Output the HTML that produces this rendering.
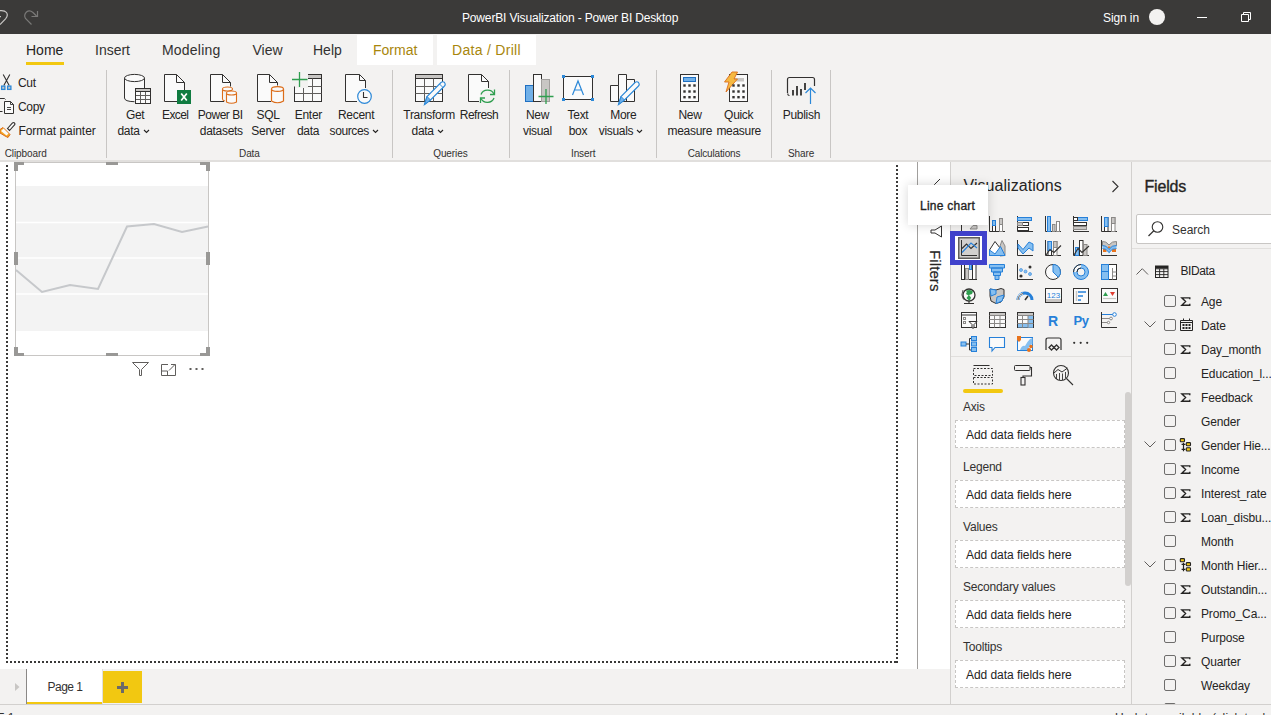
<!DOCTYPE html>
<html><head><meta charset="utf-8">
<style>
*{box-sizing:border-box;margin:0;padding:0}
html,body{width:1271px;height:715px;overflow:hidden;background:#fff;font-family:"Liberation Sans",sans-serif;color:#252423}
.a{position:absolute}
.t{position:absolute;white-space:nowrap;line-height:1}
#title{left:0;top:0;width:1271px;height:34px;background:#3b3a39}
#tabs{left:0;top:34px;width:1271px;height:32px;background:#f3f2f1}
#ribbon{left:0;top:66px;width:1271px;height:96px;background:#f3f2f1;border-bottom:2px solid #e1dfdd}
.sep{position:absolute;top:70px;width:1px;height:88px;background:#c8c6c4}
.cb{position:absolute;left:1164px;width:12px;height:12px;border:1.3px solid #6e6d6c;border-radius:2px}
.sig{left:1181px;font-size:13px;font-weight:bold;color:#323130}
.well{position:absolute;left:955px;width:170px;height:28px;background:#fff;border:1px dashed #c8c6c4}
</style></head><body>
<div class="a" id="title"></div><div class="a" id="tabs"></div><div class="a" id="ribbon"></div>
<!-- TITLE BAR -->
<svg class="a" style="left:0;top:0" width="45" height="34" viewBox="0 0 45 34">
<path d="M-1 10.8 Q4.5 10 6.5 12.5 Q8.5 15.5 5.5 18.8 L0 24.5 M-1 16.7 H1" fill="none" stroke="#c8c6c4" stroke-width="1.2"/>
<path d="M31.5 24.5 L25.5 18.5 Q23.5 15 26.5 12 Q29.5 9.5 33 12.5 L36.5 16 M37.5 11 V16.5 H31.5" fill="none" stroke="#7a7978" stroke-width="1.2"/>
</svg>
<div class="t" style="left:462px;top:11.5px;font-size:12px;color:#fff;letter-spacing:-0.16px">PowerBI Visualization - Power BI Desktop</div>
<div class="t" style="left:1103px;top:11.5px;font-size:12px;color:#fff;letter-spacing:-0.1px">Sign in</div>
<div class="a" style="left:1149px;top:9px;width:16px;height:16px;border-radius:50%;background:#f3f2f1"></div>
<div class="a" style="left:1197px;top:17px;width:10px;height:1px;background:#fff"></div>
<svg class="a" style="left:1238px;top:10px" width="16" height="16" viewBox="1238 10 16 16"><path d="M1241.5 14.5 h7 v7 h-7 z M1243.5 14.5 v-2 h7 v7 h-2" fill="none" stroke="#fff" stroke-width="1"/></svg>
<!-- TABS -->
<div class="t" style="left:26px;top:43px;font-size:14px;color:#252423">Home</div>
<div class="a" style="left:26px;top:62px;width:38px;height:3px;background:#f2c811"></div>
<div class="t" style="left:95px;top:43px;font-size:14px;color:#323130">Insert</div>
<div class="t" style="left:162px;top:43px;font-size:14px;color:#323130;letter-spacing:0.2px">Modeling</div>
<div class="t" style="left:252.5px;top:43px;font-size:14px;color:#323130">View</div>
<div class="t" style="left:313px;top:43px;font-size:14px;color:#323130">Help</div>
<div class="a" style="left:357px;top:35px;width:76px;height:30px;background:#fff"></div>
<div class="a" style="left:437px;top:35px;width:99px;height:30px;background:#fff"></div>
<div class="t" style="left:373px;top:43px;font-size:14px;color:#a8860c">Format</div>
<div class="t" style="left:452px;top:43px;font-size:14px;color:#a8860c;letter-spacing:0.3px">Data / Drill</div>
<svg class="a" style="left:0;top:0" width="850" height="161" viewBox="0 0 850 161">
<g fill="none" stroke="#323130" stroke-width="1">
<!-- cut -->
<path d="M3.2 74.5 L9.2 85.5 M9.8 74.5 L3.8 85.5" stroke-width="1.1"/>
<rect x="1.6" y="86.1" width="3.3" height="3.3" stroke="#2b88d8" stroke-width="1.3" fill="#c8c6c4"/>
<rect x="7.6" y="86.1" width="3.3" height="3.3" stroke="#2b88d8" stroke-width="1.3" fill="#c8c6c4"/>
<!-- copy -->
<path d="M-1 98.5 H4.5 L5.5 99.5 M2.5 111.5 H-1" />
<path d="M4.5 101.5 H10.5 L13.5 104.5 V113.5 H4.5 Z" fill="#fafafa"/>
<path d="M10.5 101.5 V104.5 H13.5 M7 107.5 H11 M7 109.5 H11" stroke-width="0.9"/>
<!-- format painter -->
<path d="M7.5 128.5 L12.5 123 Q13.5 122 14.5 123 Q15.5 124 14.5 125 L9.5 130.5 Z" fill="#fafafa" stroke-width="1.1"/>
<path d="M0 129.5 L3 127.5 L10 134.5 L8 137.5 L5 136 L0 133 Z" fill="#f5a623" stroke="#dc6d1a"/>
<path d="M1 131 L3.5 128.5 L8.5 133.5 L6.5 135.5 Z" fill="#fafafa" stroke="none"/>
<!-- get data -->
<path d="M124.5 78 V98 Q124.5 101.7 134.5 101.7 H136 V88 H144.5 V78 Z" fill="#fafafa" stroke="none"/>
<path d="M124.5 78 V98 Q124.5 101.5 134.5 101.7" />
<path d="M144.5 78 V88" />
<ellipse cx="134.5" cy="78" rx="10" ry="3.6" fill="#fafafa"/>
<rect x="135.5" y="88.5" width="15" height="15" fill="#fafafa"/>
<rect x="136" y="89" width="14" height="2.5" fill="#c8c6c4" stroke="none"/>
<path d="M135.5 95.5 H150.5 M135.5 99.5 H150.5 M140.5 91.5 V103.5 M145.5 91.5 V103.5" stroke="#605e5c"/>
<path d="M135.5 88.5 H150.5 V103.5 H135.5 Z M135.5 91.5 H150.5"/>
<!-- excel -->
<path d="M164.5 74.5 H176.5 L184.5 82.5 V90 H177 V101.5 H164.5 Z" fill="#fafafa" stroke="none"/>
<path d="M164.5 74.5 H176.5 L184.5 82.5 V90 M176.5 74.5 V82.5 H184.5 M164.5 74.5 V101.5 H177"/>
<rect x="177" y="90" width="14" height="14" fill="#107c41" stroke="none"/>
<path d="M181.2 93.5 L186.8 100.5 M186.8 93.5 L181.2 100.5" stroke="#fff" stroke-width="1.7"/>
<!-- power bi datasets -->
<path d="M210.5 74.5 H222.5 L230.5 82.5 V88 H222 V101.5 H210.5 Z" fill="#fafafa" stroke="none"/>
<path d="M210.5 74.5 H222.5 L230.5 82.5 V86.5 M222.5 74.5 V82.5 H230.5 M210.5 74.5 V101.5 H224"/>
<g stroke="#dc6d1a" stroke-width="1.1">
<path d="M222.5 89 V99 Q222.5 100.5 225 101" fill="#fafafa"/>
<ellipse cx="227.5" cy="89" rx="5" ry="2" fill="#fafafa"/>
<path d="M226.5 93 V102 Q231.5 104.5 236.5 102 V93" fill="#fafafa"/>
<ellipse cx="231.5" cy="93" rx="5" ry="2" fill="#fafafa"/>
</g>
<!-- sql -->
<path d="M257.5 74.5 H269.5 L277.5 82.5 V88 H271 V101.5 H257.5 Z" fill="#fafafa" stroke="none"/>
<path d="M257.5 74.5 H269.5 L277.5 82.5 V85.5 M269.5 74.5 V82.5 H277.5 M257.5 74.5 V101.5 H271"/>
<g stroke="#dc6d1a" stroke-width="1.2">
<path d="M271.5 89 V101 Q277.5 104.5 283.5 101 V89" fill="#fafafa"/>
<ellipse cx="277.5" cy="89" rx="6" ry="2.4" fill="#fafafa"/>
</g>
<!-- enter data -->
<rect x="294.5" y="74.5" width="27" height="27" fill="#fafafa"/>
<rect x="303" y="75" width="18" height="3.5" fill="#c8c6c4" stroke="none"/>
<path d="M294.5 78.5 H321.5" />
<path d="M294.5 86.5 H321.5 M294.5 93.5 H321.5 M303.5 78.5 V101.5 M312.5 78.5 V101.5" stroke="#605e5c"/>
<rect x="290" y="71" width="18" height="17" fill="#f3f2f1" stroke="none"/>
<path d="M294.5 86.5 V101.5" />
<path d="M292 79.5 H307.5 M299.5 72 V87" stroke="#2f9e4f" stroke-width="1.3"/>
<!-- recent -->
<path d="M345.5 74.5 H359.5 L365.5 80.5 V90 H358 V101.5 H345.5 Z" fill="#fafafa" stroke="none"/>
<path d="M345.5 74.5 H359.5 L365.5 80.5 V88 M359.5 74.5 V80.5 H365.5 M345.5 74.5 V101.5 H357"/>
<circle cx="364.5" cy="96.5" r="6.8" fill="#fafafa" stroke="#2b88d8" stroke-width="1.2"/>
<path d="M363.5 92 V97.5 H367.5" stroke-width="1.1"/>
<!-- transform -->
<rect x="415.5" y="74.5" width="27" height="27" fill="#fafafa"/>
<rect x="416" y="75" width="26" height="3.5" fill="#c8c6c4" stroke="none"/>
<path d="M415.5 78.5 H442.5" />
<path d="M415.5 86.5 H442.5 M415.5 93.5 H442.5 M424.5 78.5 V101.5 M433.5 78.5 V101.5" stroke="#605e5c"/>
<path d="M424.5 104.5 L427 96.5 L441 82.5 Q443 81 444.5 82.5 Q446 84.5 444.5 86 L430.5 100 Z" fill="#fafafa" stroke="#2b88d8" stroke-width="1.1"/>
<path d="M424.5 104.5 L427 96.5 L430.5 100 Z" fill="#70b0e8" stroke="#2b88d8"/>
<path d="M439.5 84 L443 87.5" stroke="#2b88d8"/>
<!-- refresh -->
<path d="M468.5 74.5 H481.5 L488.5 81.5 V90 H480 V101.5 H468.5 Z" fill="#fafafa" stroke="none"/>
<path d="M468.5 74.5 H481.5 L488.5 81.5 V88 M481.5 74.5 V81.5 H488.5 M468.5 74.5 V101.5 H479"/>
<g stroke="#2f9e4f" stroke-width="1.3">
<path d="M481 94.5 A7 6.5 0 0 1 494 94" />
<path d="M494 98 A7 6.5 0 0 1 481 98.5" />
<path d="M494.5 89.5 V94.5 H490 M480.5 103 V98 H485"/>
</g>
<!-- new visual -->
<rect x="525.5" y="85.5" width="8" height="16" fill="#70b0e8" stroke="#1f6fc1"/>
<rect x="533.5" y="74.5" width="8" height="27" fill="#fafafa"/>
<rect x="541.5" y="79.5" width="8" height="22" fill="#c8c6c4" stroke="#a19f9d"/>
<path d="M538.5 96.5 H553.5 M546 89 V104" stroke="#2f9e4f" stroke-width="1.3"/>
<!-- text box -->
<rect x="563.5" y="76.5" width="29" height="23" fill="#fafafa"/>
<g fill="#2b88d8" stroke="none">
<rect x="562" y="75" width="3" height="3"/><rect x="591" y="75" width="3" height="3"/>
<rect x="562" y="98" width="3" height="3"/><rect x="591" y="98" width="3" height="3"/>
</g>
<path d="M572.5 95 L578 81 L583.5 95 M574.5 90 H581.5" stroke="#2b88d8" stroke-width="1.2"/>
<!-- more visuals -->
<path d="M610.5 101.5 V85.5 H618.5 V74.5 H626.5 V79.5 H634.5 V101.5 Z" fill="#fafafa"/>
<path d="M618.5 85.5 V101.5 M626.5 79.5 V101.5"/>
<path d="M618.5 104.5 L621 96.5 L635 82.5 Q637 81 638.5 82.5 Q640 84.5 638.5 86 L624.5 100 Z" fill="#fafafa" stroke="#2b88d8" stroke-width="1.1"/>
<path d="M618.5 104.5 L621 96.5 L624.5 100 Z" fill="#70b0e8" stroke="#2b88d8"/>
<!-- new measure -->
<rect x="680.5" y="74.5" width="18" height="27" fill="#fafafa"/>
<rect x="683.5" y="77.5" width="12" height="4" fill="#70b0e8" stroke="#1f6fc1"/>
<!-- quick measure -->
<rect x="729.5" y="74.5" width="18" height="27" fill="#fafafa"/>
<rect x="733" y="78" width="11" height="3.5" fill="#c8c6c4" stroke="none"/>
<path d="M732 72 H737.5 L734 79 H737.5 L726 92 L729 82 H724.5 Z" fill="#f5b942" stroke="#dc6d1a" stroke-width="0.9"/>
<!-- publish -->
<path d="M804 77.5 H812.5 Q814.5 77.5 814.5 79.5 V86 M788 93.5 Q787.5 95.5 789.5 95.5 M787.5 93 V79.5 Q787.5 77.5 789.5 77.5 H804" stroke-width="1.2"/>
<path d="M793 95.5 V90 M797 95.5 V86 M801 95.5 V89 M805 90 V83" stroke-width="1.8"/>
<path d="M810.5 104 V88.5 M805.5 93 L810.5 88 L815.5 93" stroke="#2b88d8" stroke-width="1.2"/>
</g>
<g fill="#323130">
<rect x="683.3" y="84.3" width="2.4" height="2.4"/><rect x="683.3" y="90.3" width="2.4" height="2.4"/><rect x="683.3" y="96" width="2.4" height="2.4"/>
<rect x="688.3" y="84.3" width="2.4" height="2.4"/><rect x="688.3" y="90.3" width="2.4" height="2.4"/><rect x="688.3" y="96" width="2.4" height="2.4"/>
<rect x="693.3" y="84.3" width="2.4" height="2.4"/><rect x="693.3" y="90.3" width="2.4" height="2.4"/><rect x="693.3" y="96" width="2.4" height="2.4"/>
<rect x="732.3" y="84.3" width="2.4" height="2.4"/><rect x="732.3" y="90.3" width="2.4" height="2.4"/><rect x="732.3" y="96" width="2.4" height="2.4"/>
<rect x="737.3" y="84.3" width="2.4" height="2.4"/><rect x="737.3" y="90.3" width="2.4" height="2.4"/><rect x="737.3" y="96" width="2.4" height="2.4"/>
<rect x="742.3" y="84.3" width="2.4" height="2.4"/><rect x="742.3" y="90.3" width="2.4" height="2.4"/><rect x="742.3" y="96" width="2.4" height="2.4"/>
</g>
</svg>
<!-- RIBBON LABELS -->
<div class="sep" style="left:106px"></div>
<div class="sep" style="left:392px"></div>
<div class="sep" style="left:509px"></div>
<div class="sep" style="left:656px"></div>
<div class="sep" style="left:771px"></div>
<div class="sep" style="left:830px"></div>
<div class="t" style="left:18px;top:77px;font-size:12px;letter-spacing:-0.3px;color:#252423;">Cut</div>
<div class="t" style="left:18px;top:101px;font-size:12px;letter-spacing:-0.3px;color:#252423;">Copy</div>
<div class="t" style="left:18.4px;top:125px;font-size:12px;letter-spacing:-0.05px;color:#252423;">Format painter</div>
<div class="t" style="left:4.7px;top:149px;font-size:10px;letter-spacing:-0.1px;color:#323130;">Clipboard</div>
<div class="t" style="left:189.4px;width:120px;text-align:center;top:149px;font-size:10px;letter-spacing:-0.1px;color:#323130;">Data</div>
<div class="t" style="left:390.4px;width:120px;text-align:center;top:149px;font-size:10px;letter-spacing:-0.1px;color:#323130;">Queries</div>
<div class="t" style="left:523.2px;width:120px;text-align:center;top:149px;font-size:10px;letter-spacing:-0.1px;color:#323130;">Insert</div>
<div class="t" style="left:654px;width:120px;text-align:center;top:149px;font-size:10px;letter-spacing:-0.15px;color:#323130;">Calculations</div>
<div class="t" style="left:741px;width:120px;text-align:center;top:149px;font-size:10px;letter-spacing:-0.1px;color:#323130;">Share</div>
<div class="t" style="left:75.19999999999999px;width:120px;text-align:center;top:109px;font-size:12px;letter-spacing:-0.3px;color:#252423;">Get</div>
<div class="t" style="left:73.5px;width:120px;text-align:center;top:125px;font-size:12px;letter-spacing:-0.3px;color:#252423;">data<svg width="7" height="5" viewBox="0 0 7 5" style="margin-left:3px;vertical-align:1px"><path d="M1 1 L3.5 3.5 L6 1" fill="none" stroke="#252423" stroke-width="1.1"/></svg></div>
<div class="t" style="left:115.19999999999999px;width:120px;text-align:center;top:109px;font-size:12px;letter-spacing:-0.6px;color:#252423;">Excel</div>
<div class="t" style="left:160.2px;width:120px;text-align:center;top:109px;font-size:12px;letter-spacing:-0.5px;color:#252423;">Power BI</div>
<div class="t" style="left:161.3px;width:120px;text-align:center;top:125px;font-size:12px;letter-spacing:-0.3px;color:#252423;">datasets</div>
<div class="t" style="left:208.10000000000002px;width:120px;text-align:center;top:109px;font-size:12px;letter-spacing:-0.3px;color:#252423;">SQL</div>
<div class="t" style="left:208.10000000000002px;width:120px;text-align:center;top:125px;font-size:12px;letter-spacing:-0.3px;color:#252423;">Server</div>
<div class="t" style="left:248.39999999999998px;width:120px;text-align:center;top:109px;font-size:12px;letter-spacing:-0.3px;color:#252423;">Enter</div>
<div class="t" style="left:248px;width:120px;text-align:center;top:125px;font-size:12px;letter-spacing:-0.3px;color:#252423;">data</div>
<div class="t" style="left:296.1px;width:120px;text-align:center;top:109px;font-size:12px;letter-spacing:-0.3px;color:#252423;">Recent</div>
<div class="t" style="left:294.2px;width:120px;text-align:center;top:125px;font-size:12px;letter-spacing:-0.4px;color:#252423;">sources<svg width="7" height="5" viewBox="0 0 7 5" style="margin-left:3px;vertical-align:1px"><path d="M1 1 L3.5 3.5 L6 1" fill="none" stroke="#252423" stroke-width="1.1"/></svg></div>
<div class="t" style="left:369.1px;width:120px;text-align:center;top:109px;font-size:12px;letter-spacing:-0.3px;color:#252423;">Transform</div>
<div class="t" style="left:367.6px;width:120px;text-align:center;top:125px;font-size:12px;letter-spacing:-0.3px;color:#252423;">data<svg width="7" height="5" viewBox="0 0 7 5" style="margin-left:3px;vertical-align:1px"><path d="M1 1 L3.5 3.5 L6 1" fill="none" stroke="#252423" stroke-width="1.1"/></svg></div>
<div class="t" style="left:419px;width:120px;text-align:center;top:109px;font-size:12px;letter-spacing:-0.5px;color:#252423;">Refresh</div>
<div class="t" style="left:477.5px;width:120px;text-align:center;top:109px;font-size:12px;letter-spacing:-0.3px;color:#252423;">New</div>
<div class="t" style="left:477.4px;width:120px;text-align:center;top:125px;font-size:12px;letter-spacing:-0.3px;color:#252423;">visual</div>
<div class="t" style="left:518px;width:120px;text-align:center;top:109px;font-size:12px;letter-spacing:-0.3px;color:#252423;">Text</div>
<div class="t" style="left:517.9px;width:120px;text-align:center;top:125px;font-size:12px;letter-spacing:-0.3px;color:#252423;">box</div>
<div class="t" style="left:563.3px;width:120px;text-align:center;top:109px;font-size:12px;letter-spacing:-0.3px;color:#252423;">More</div>
<div class="t" style="left:561px;width:120px;text-align:center;top:125px;font-size:12px;letter-spacing:-0.3px;color:#252423;">visuals<svg width="7" height="5" viewBox="0 0 7 5" style="margin-left:3px;vertical-align:1px"><path d="M1 1 L3.5 3.5 L6 1" fill="none" stroke="#252423" stroke-width="1.1"/></svg></div>
<div class="t" style="left:630px;width:120px;text-align:center;top:109px;font-size:12px;letter-spacing:-0.3px;color:#252423;">New</div>
<div class="t" style="left:629.8px;width:120px;text-align:center;top:125px;font-size:12px;letter-spacing:-0.3px;color:#252423;">measure</div>
<div class="t" style="left:678.7px;width:120px;text-align:center;top:109px;font-size:12px;letter-spacing:-0.3px;color:#252423;">Quick</div>
<div class="t" style="left:678.7px;width:120px;text-align:center;top:125px;font-size:12px;letter-spacing:-0.3px;color:#252423;">measure</div>
<div class="t" style="left:741.4px;width:120px;text-align:center;top:109px;font-size:12px;letter-spacing:-0.3px;color:#252423;">Publish</div>
<!-- CANVAS -->
<div class="a" style="left:0;top:162px;width:950px;height:507px;background:#fff"></div>
<div class="a" style="left:917px;top:162px;width:1px;height:507px;background:#a19f9d"></div>
<!-- dotted page border -->
<div class="a" style="left:6px;top:165px;width:2px;height:498px;background:repeating-linear-gradient(to bottom,#3b3a39 0 2px,transparent 2px 4px)"></div>
<div class="a" style="left:896px;top:165px;width:2px;height:498px;background:repeating-linear-gradient(to bottom,#3b3a39 0 2px,transparent 2px 4px)"></div>
<div class="a" style="left:6px;top:661px;width:892px;height:2px;background:repeating-linear-gradient(to right,#3b3a39 0 2px,transparent 2px 4px)"></div>
<!-- visual -->
<div class="a" style="left:15px;top:162px;width:194px;height:194px;border:1px solid #c8c6c4;background:#fff"></div>
<svg class="a" style="left:0;top:150px" width="230" height="240" viewBox="0 150 230 240">
<rect x="16" y="186" width="192" height="145" fill="#f3f3f3"/>
<path d="M16 222.5 H208 M16 258 H208 M16 294 H208" stroke="#fff" stroke-width="1.5"/>
<polyline points="16,270 42,292 70,285 98,289 127,226.5 154,224 182,232 208,226.5" fill="none" stroke="#c6c8cb" stroke-width="2"/>
<g fill="#999896">
<path d="M14 162 H24 V165 H18 V171 H14 Z"/>
<path d="M210 162 H200 V165 H206 V171 H210 Z"/>
<path d="M14 356 H24 V353 H18 V347 H14 Z"/>
<path d="M210 356 H200 V353 H206 V347 H210 Z"/>
<rect x="106" y="162" width="12" height="3"/>
<rect x="106" y="353" width="12" height="3"/>
<rect x="14" y="252" width="4" height="13"/>
<rect x="206" y="252" width="4" height="13"/>
</g>
<g fill="none" stroke="#605e5c" stroke-width="1">
<path d="M132.5 362.5 H148.5 L141.5 369.5 V375.5 H139.5 V369.5 Z"/>
<path d="M168 364.5 H161.5 V375.5 H175.5 V369 M161.5 371 H167.5 V375.5 M169 370.5 L175 364.5 M171 364.5 H175.5 V369"/>
</g>
<g fill="#605e5c"><rect x="189.5" y="368" width="2" height="2"/><rect x="195.5" y="368" width="2" height="2"/><rect x="201.5" y="368" width="2" height="2"/></g>
</svg>
<!-- pagebar -->
<div class="a" style="left:0;top:669px;width:950px;height:35px;background:#f3f2f1"></div>
<svg class="a" style="left:14px;top:682px" width="8" height="10" viewBox="0 0 8 10"><path d="M1 1 L5.5 5 L1 9 Z" fill="#c8c6c4"/></svg>
<div class="a" style="left:26px;top:669px;width:77px;height:35px;background:#fff;border-left:1px solid #8a8886;border-right:1px solid #e1dfdd"></div>
<div class="a" style="left:27px;top:702px;width:75px;height:2px;background:#f2c811"></div>
<div class="a" style="left:103px;top:671px;width:39px;height:32px;background:#f2c811"></div>
<div class="a" style="left:117px;top:686px;width:11px;height:3px;background:#6b6a69"></div>
<div class="a" style="left:121px;top:682px;width:3px;height:11px;background:#6b6a69"></div>
<!-- status -->
<div class="a" style="left:0;top:704px;width:1271px;height:1px;background:#d2d0ce"></div>
<div class="a" style="left:0;top:705px;width:1271px;height:10px;background:#f3f2f1"></div>
<!-- PANES -->
<div class="a" style="left:950px;top:162px;width:182px;height:542px;background:#f3f2f1;border-left:1px solid #d2d0ce"></div>
<div class="a" style="left:1131px;top:162px;width:140px;height:542px;background:#f3f2f1;border-left:1px solid #d2d0ce"></div>
<!-- filters pane -->
<svg class="a" style="left:918px;top:170px" width="32" height="80" viewBox="918 170 32 80">
<path d="M940 179 L934.5 184.5 L940 190" fill="none" stroke="#323130" stroke-width="1"/>
<path d="M941.5 226 V237 L935 233 H931 V230 H935 Z" fill="none" stroke="#323130" stroke-width="1"/>
</svg>
<div class="t" style="left:928px;top:250px;font-size:15px;letter-spacing:0.1px;-webkit-text-stroke:0.2px #252423;writing-mode:vertical-rl;color:#252423">Filters</div>
<!-- viz pane -->
<div class="t" style="left:963.5px;top:178px;font-size:16px;letter-spacing:0.05px;color:#252423">Visualizations</div>
<svg class="a" style="left:1110px;top:178px" width="12" height="16" viewBox="0 0 12 16"><path d="M2.5 3 L8 8.5 L2.5 14" fill="none" stroke="#323130" stroke-width="1.1"/></svg>
<div class="a" style="left:951px;top:356px;width:180px;height:1px;background:#e1dfdd"></div>
<svg class="a" style="left:960px;top:360px" width="120" height="36" viewBox="960 360 120 36">
<g fill="none" stroke="#323130" stroke-width="1">
<path d="M973.5 365.5 H989.5"/>
<rect x="973.5" y="368.5" width="19" height="7" stroke-dasharray="2 1.5"/>
<rect x="973.5" y="377.5" width="19" height="6.5" stroke-dasharray="2 1.5"/>
<rect x="1014.5" y="365.5" width="15.5" height="5" rx="1"/>
<path d="M1030 367.5 H1031.5 V376 H1023 V377.5" stroke-width="1.1"/>
<rect x="1021" y="377.5" width="4" height="7.5" stroke-width="1.1"/>
<circle cx="1061" cy="373" r="7.5" stroke-width="1.1"/>
<path d="M1066.5 378.5 L1073 385" stroke-width="1.1"/>
<path d="M1054 373 L1058 369.5 L1062 372 L1067.5 368" stroke-width="1"/>
<path d="M1056.5 374 V379 M1059.5 373 V380 M1062.5 373.5 V380 M1065.5 372 V378" stroke-width="0.9"/>
</g>
</svg>
<div class="a" style="left:963px;top:389px;width:40px;height:4px;border-radius:2px;background:#f2c811"></div>
<div class="a" style="left:1125px;top:392px;width:6px;height:194px;border-radius:3px;background:#d2d0ce"></div>
<div class="t" style="left:963px;top:401px;font-size:12px;letter-spacing:-0.2px;color:#323130">Axis</div>
<div class="well" style="top:420px"></div>
<div class="t" style="left:966px;top:429px;font-size:12px;letter-spacing:-0.05px">Add data fields here</div>
<div class="t" style="left:963px;top:461px;font-size:12px;letter-spacing:-0.2px;color:#323130">Legend</div>
<div class="well" style="top:480px"></div>
<div class="t" style="left:966px;top:489px;font-size:12px;letter-spacing:-0.05px">Add data fields here</div>
<div class="t" style="left:963px;top:521px;font-size:12px;letter-spacing:-0.2px;color:#323130">Values</div>
<div class="well" style="top:540px"></div>
<div class="t" style="left:966px;top:549px;font-size:12px;letter-spacing:-0.05px">Add data fields here</div>
<div class="t" style="left:963px;top:581px;font-size:12px;letter-spacing:-0.2px;color:#323130">Secondary values</div>
<div class="well" style="top:600px"></div>
<div class="t" style="left:966px;top:609px;font-size:12px;letter-spacing:-0.05px">Add data fields here</div>
<div class="t" style="left:963px;top:641px;font-size:12px;letter-spacing:-0.2px;color:#323130">Tooltips</div>
<div class="well" style="top:660px"></div>
<div class="t" style="left:966px;top:669px;font-size:12px;letter-spacing:-0.05px">Add data fields here</div>
<!-- fields pane -->
<div class="t" style="left:1144.5px;top:179px;font-size:16px;color:#252423;letter-spacing:-0.2px;-webkit-text-stroke:0.35px #252423">Fields</div>
<div class="a" style="left:1136px;top:214px;width:145px;height:30px;background:#fff;border:1px solid #c8c6c4;border-radius:2px"></div>
<svg class="a" style="left:1146px;top:219px" width="20" height="20" viewBox="1146 219 20 20"><circle cx="1157.5" cy="227" r="5.3" fill="none" stroke="#323130" stroke-width="1.1"/><path d="M1153.8 230.8 L1148.5 236" stroke="#323130" stroke-width="1.2"/></svg>
<div class="t" style="left:1172px;top:224px;font-size:12px;letter-spacing:0px;color:#323130">Search</div>
<div class="a" style="left:1132px;top:248px;width:139px;height:1px;background:#e1dfdd"></div>
<svg class="a" style="left:1135px;top:263px" width="40" height="18" viewBox="1135 263 40 18">
<path d="M1136.5 274.5 L1142.3 268.7 L1148 274.5" fill="none" stroke="#605e5c" stroke-width="1"/>
<rect x="1155.5" y="266" width="12.5" height="11.5" fill="none" stroke="#252423"/>
<path d="M1155.5 268.8 H1168 M1155.5 271.6 H1168 M1155.5 274.6 H1168 M1159.6 268.8 V277.5 M1163.8 268.8 V277.5" stroke="#252423" stroke-width="0.9"/>
<rect x="1155.5" y="266" width="12.5" height="2.5" fill="#252423"/>
</svg>
<div class="t" style="left:1180.5px;top:265px;font-size:12px;letter-spacing:-0.4px">BIData</div>
<svg class="a" style="left:0;top:0" width="1271" height="400" viewBox="0 0 1271 400">
<g transform="translate(961,216)"><path d="M0.5 0 V15.5 H6" fill="none" stroke="#323130"/><path d="M9 13 L12 9.5 H16 V13 Z" fill="#c8c6c4" stroke="#8a8886"/></g>
<g transform="translate(989,216)"><path d="M0.5 0 V15.5 H16" fill="none" stroke="#323130"/><rect x="3.5" y="4.5" width="3" height="11" fill="#fff" stroke="#323130"/><rect x="3.5" y="4.5" width="3" height="5" fill="#86bff0" stroke="#2680d9"/><rect x="10.5" y="2.5" width="3" height="13" fill="#fff" stroke="#8a8886"/><rect x="10.5" y="2.5" width="3" height="6" fill="#c8c6c4" stroke="#8a8886"/></g>
<g transform="translate(1017,216)"><path d="M0.5 0 V15.5 H16" fill="none" stroke="#323130"/><rect x="0.5" y="1.5" width="14" height="3" fill="#86bff0" stroke="#2680d9"/><rect x="0.5" y="6.5" width="11" height="3" fill="#fff" stroke="#323130"/><rect x="0.5" y="6.5" width="5" height="3" fill="#c8c6c4" stroke="#8a8886"/><rect x="0.5" y="11.5" width="11" height="3" fill="#fff" stroke="#323130"/></g>
<g transform="translate(1045,216)"><path d="M0.5 0 V15.5 H16" fill="none" stroke="#323130"/><rect x="2.5" y="0.5" width="3" height="15" fill="#86bff0" stroke="#2680d9"/><rect x="7.5" y="8.5" width="2.5" height="7" fill="#c8c6c4" stroke="#8a8886"/><rect x="11.5" y="5.5" width="3" height="10" fill="#fff" stroke="#8a8886"/></g>
<g transform="translate(1073,216)"><path d="M0.5 0 V15.5 H16" fill="none" stroke="#323130"/><rect x="4.5" y="1.5" width="10" height="3" fill="#86bff0" stroke="#2680d9"/><rect x="0.5" y="1.5" width="4" height="3" fill="#fff" stroke="#323130"/><rect x="0.5" y="6.5" width="13" height="3" fill="#fff" stroke="#323130"/><rect x="0.5" y="10.5" width="13" height="3" fill="#c8c6c4" stroke="#8a8886"/></g>
<g transform="translate(1101,216)"><path d="M0.5 0 V15.5 H16" fill="none" stroke="#323130"/><rect x="3.5" y="1.5" width="3.5" height="14" fill="#fff" stroke="#323130"/><rect x="3.5" y="1.5" width="3.5" height="9" fill="#86bff0" stroke="#2680d9"/><rect x="10.5" y="1.5" width="3.5" height="14" fill="#fff" stroke="#8a8886"/><rect x="10.5" y="1.5" width="3.5" height="6" fill="#c8c6c4" stroke="#8a8886"/></g>
<g transform="translate(989,240)"><path d="M11 16 V6 L13 0.5 L16 6 V15.5 Z" fill="#c8c6c4" stroke="#8a8886"/><path d="M0.5 10 L6 1.5 L11 8 V15.5 H0.5 Z" fill="#fff" stroke="#323130"/><path d="M0.5 15.5 V10 L6 14 L11.5 6.5 L16 15.5 Z" fill="#86bff0" stroke="#2680d9"/></g>
<g transform="translate(1017,240)"><path d="M0.5 0 V15.5 H16" fill="none" stroke="#323130"/><path d="M1 4 L6 9.5 L12 2 L16 4 V11 L12 8 L6 14 L1 8 Z" fill="#86bff0" stroke="#2680d9"/></g>
<g transform="translate(1045,240)"><path d="M0.5 0 V15.5 H16" fill="none" stroke="#323130"/><rect x="3" y="1.5" width="3.5" height="14" fill="#fff" stroke="#323130"/><rect x="3" y="1.5" width="3.5" height="9" fill="#86bff0" stroke="#2680d9"/><rect x="8.5" y="1.5" width="3.5" height="14" fill="#fff" stroke="#8a8886"/><rect x="8.5" y="1.5" width="3.5" height="6" fill="#c8c6c4" stroke="#8a8886"/><path d="M1 15 L5 9.5 L9 12.5 L16 5.5" fill="none" stroke="#323130" stroke-width="1.1"/></g>
<g transform="translate(1073,240)"><path d="M0.5 0 V15.5 H16" fill="none" stroke="#323130"/><rect x="2.5" y="7.5" width="3.5" height="8" fill="#86bff0" stroke="#2680d9"/><rect x="6.5" y="0.5" width="3.5" height="15" fill="#fff" stroke="#323130"/><rect x="10.5" y="4.5" width="3.5" height="11" fill="#c8c6c4" stroke="#8a8886"/><path d="M1 15 L5 8.5 L9 12.5 L16 6" fill="none" stroke="#323130" stroke-width="1.1"/></g>
<g transform="translate(1101,240)"><path d="M0.5 0 V15.5 H16" fill="none" stroke="#323130"/><path d="M1.5 1.5 Q5 1 8 5 Q11 1 15.5 1.5 V6 Q11 5.5 8 9 Q5 5.5 1.5 6 Z" fill="#c8c6c4" stroke="#8a8886"/><rect x="2" y="9" width="3.5" height="3" fill="#e8731d"/><rect x="11" y="9" width="4" height="3" fill="#e8731d"/><rect x="7" y="6.5" width="2.5" height="2" fill="#e8731d"/><path d="M1.5 7 Q5 6.5 8 11 Q11 6.5 15.5 7" fill="none" stroke="#86bff0" stroke-width="3"/><path d="M1.5 5.5 Q5 5 8 9.5 Q11 5 15.5 5.5 M1.5 8.5 Q5 8 8 12.5 Q11 8 15.5 8.5" fill="none" stroke="#2680d9" stroke-width="0.9"/></g>
<g transform="translate(961,264)"><path d="M0.5 15.5 H16" stroke="#323130"/><rect x="0.5" y="0.5" width="3" height="15" fill="#fff" stroke="#323130"/><rect x="4.5" y="4.5" width="3" height="11" fill="#c8c6c4" stroke="#8a8886"/><rect x="8.5" y="0.5" width="2" height="5" fill="#86bff0" stroke="#2680d9"/><rect x="11.5" y="0.5" width="3.5" height="15" fill="#fff" stroke="#323130"/></g>
<g transform="translate(989,264)"><path d="M0.5 0.5 H15.5 V4 H0.5 Z M2.5 4 H13.5 V8 H2.5 Z M4.5 8 H11.5 V11.5 H4.5 Z M6 11.5 H10 V15.5 H6 Z" fill="#86bff0" stroke="#2680d9"/></g>
<g transform="translate(1017,264)"><path d="M0.5 0 V15.5 H16" fill="none" stroke="#323130"/><circle cx="4" cy="6" r="1.5" fill="#86bff0" stroke="#2680d9" stroke-width="0.6"/><circle cx="8.5" cy="7.5" r="1.5" fill="#86bff0" stroke="#2680d9" stroke-width="0.6"/><circle cx="13" cy="3" r="1.5" fill="#323130"/><circle cx="4" cy="12" r="1.6" fill="#323130"/><circle cx="13" cy="10" r="1.5" fill="#86bff0" stroke="#2680d9" stroke-width="0.6"/></g>
<g transform="translate(1045,264)"><circle cx="8" cy="8" r="7.5" fill="#fafafa" stroke="#323130"/><path d="M8 8 V0.5 A7.5 7.5 0 0 1 13.3 13.3 Z" fill="#86bff0" stroke="#2680d9"/></g>
<g transform="translate(1073,264)"><circle cx="8" cy="8" r="5.75" fill="none" stroke="#86bff0" stroke-width="3.5"/><path d="M1.5 8 A6.5 6.5 0 0 1 8 1.5" fill="none" stroke="#fafafa" stroke-width="4"/><circle cx="8" cy="8" r="7.5" fill="none" stroke="#2680d9"/><circle cx="8" cy="8" r="4" fill="none" stroke="#2680d9"/><path d="M0.5 8 A7.5 7.5 0 0 1 8 0.5 M4 8 A4 4 0 0 1 8 4" fill="none" stroke="#323130" stroke-width="1"/></g>
<g transform="translate(1101,264)"><rect x="0.5" y="0.5" width="15" height="15" fill="#fff" stroke="#323130"/><rect x="0.5" y="0.5" width="7" height="7" fill="#86bff0" stroke="#2680d9"/><rect x="0.5" y="7.5" width="7" height="8" fill="#86bff0" stroke="#2680d9"/><path d="M11.5 4 V15.5 M11.5 8 H15.5 M11.5 12 H15.5" stroke="#8a8886" fill="none"/></g>
<g transform="translate(961,288)"><circle cx="8" cy="7" r="6" fill="#fafafa" stroke="#323130" stroke-width="1.3"/><path d="M5 2.5 Q6.5 4 5 6 L7.5 7.5 L5.5 10 Q7 12 9 12.5 L10 9.5 L8 7 L11 6 L12 3.5 Q10 1.5 8 2 Z" fill="#2f9e4f"/><path d="M3 15.5 H13 M8 13 V15.5" stroke="#323130" stroke-width="1.1"/><path d="M2 2 Q-0.5 7 2.5 11.5" fill="none" stroke="#323130" stroke-width="0.8"/></g>
<g transform="translate(989,288)"><path d="M1 1 L7 2 L12 0.5 L15 1.5 L15 9 L12 14 L7 15.5 L2 13 L1 8 Z" fill="#c8c6c4" stroke="#323130"/><path d="M1 1 L7 2 L7 6 L2 8 Z" fill="#86bff0" stroke="#2680d9"/><path d="M8 9 L15 7 L13 13 L7 15.5 Z" fill="#86bff0" stroke="#2680d9"/></g>
<g transform="translate(1017,288)"><path d="M1 12 A7 7 0 0 1 15 12" fill="none" stroke="#2680d9" stroke-width="3"/><path d="M1 12 A7 7 0 0 1 6 5.5" fill="none" stroke="#fff" stroke-width="2"/><path d="M1 12 A7 7 0 0 1 6 5.5" fill="none" stroke="#323130" stroke-width="0.8"/><path d="M8 12 L11 8" stroke="#323130" stroke-width="1.6"/></g>
<g transform="translate(1045,288)"><rect x="0.5" y="0.5" width="16" height="14" fill="#fafafa" stroke="#323130"/><rect x="1" y="11" width="15" height="3" fill="#c8c6c4"/><text x="8.5" y="9.5" font-family="Liberation Sans" font-size="8" fill="#2680d9" text-anchor="middle">123</text></g>
<g transform="translate(1073,288)"><rect x="0.5" y="0.5" width="15" height="15" fill="#fafafa" stroke="#323130"/><path d="M3.5 3 V13" stroke="#c8c6c4" stroke-width="1.5"/><path d="M5 4 H13 M5 8 H10 M5 12 H8" stroke="#2680d9" stroke-width="1.5"/></g>
<g transform="translate(1101,288)"><rect x="0.5" y="0.5" width="16" height="14" fill="#fafafa" stroke="#323130"/><path d="M2 8 L4.5 4 L7 8 Z" fill="#2f9e4f"/><path d="M9 4 H14 L11.5 8 Z" fill="#e03c31"/><path d="M2 10.5 H15" stroke="#c8c6c4" stroke-width="1.2"/></g>
<g transform="translate(961,312)"><rect x="0.5" y="0.5" width="15" height="15" fill="#fafafa" stroke="#323130"/><path d="M0.5 3 H15.5" stroke="#323130"/><rect x="2.5" y="5.5" width="2" height="2" fill="none" stroke="#8a8886"/><rect x="2.5" y="9.5" width="2" height="2" fill="none" stroke="#8a8886"/><path d="M8 9.5 H16 L13 12.5 V16 H11 V12.5 Z" fill="#fafafa" stroke="#323130"/></g>
<g transform="translate(989,312)"><rect x="0.5" y="0.5" width="16" height="15" fill="#fafafa" stroke="#323130"/><rect x="1" y="1" width="15" height="2.5" fill="#c8c6c4"/><path d="M0.5 3.5 H16.5 M0.5 7.5 H16.5 M0.5 11.5 H16.5 M5.5 3.5 V15.5 M11 3.5 V15.5" stroke="#8a8886"/></g>
<g transform="translate(1017,312)"><rect x="0.5" y="0.5" width="16" height="15" fill="#fafafa" stroke="#323130"/><rect x="11" y="3.5" width="5" height="12" fill="#86bff0"/><rect x="1" y="11.5" width="15" height="4" fill="#86bff0"/><rect x="1" y="1" width="15" height="2.5" fill="#c8c6c4"/><path d="M0.5 3.5 H16.5 M0.5 7.5 H16.5 M0.5 11.5 H16.5 M5.5 3.5 V15.5 M11 3.5 V15.5" stroke="#8a8886"/></g>
<g transform="translate(1045,312)"><text x="8" y="14" font-family="Liberation Sans" font-weight="bold" font-size="14" fill="#2680d9" text-anchor="middle">R</text></g>
<g transform="translate(1073,312)"><text x="8" y="13" font-family="Liberation Sans" font-weight="bold" font-size="13" fill="#2680d9" text-anchor="middle" letter-spacing="-0.5">Py</text></g>
<g transform="translate(1101,312)"><path d="M0.5 0 V15.5 H16" fill="none" stroke="#323130"/><path d="M1 2.5 H12 M1 6.5 H9 M1 10.5 H7" stroke="#8a8886"/><path d="M1 2.5 H12" stroke="#2680d9"/><circle cx="13.5" cy="2.5" r="1.8" fill="#fff" stroke="#2680d9"/><circle cx="10" cy="6.5" r="1.4" fill="#fff" stroke="#8a8886"/><circle cx="7.5" cy="10.5" r="1.2" fill="#fff" stroke="#8a8886"/></g>
<g transform="translate(961,336)"><rect x="0" y="6" width="5" height="4" fill="#86bff0" stroke="#2680d9"/><path d="M5 8 H8 M8.5 2.5 V14 M8.5 2.5 H10 M8.5 14 H10" stroke="#323130" fill="none"/><rect x="10.5" y="0.5" width="5" height="4" fill="#86bff0" stroke="#2680d9"/><rect x="10.5" y="6" width="5" height="4" fill="#86bff0" stroke="#2680d9"/><rect x="10.5" y="11.5" width="5" height="4" fill="#86bff0" stroke="#2680d9"/></g>
<g transform="translate(989,336)"><path d="M0.5 1.5 H15.5 V11.5 H6 L3 15 V11.5 H0.5 Z" fill="#fafafa" stroke="#2680d9" stroke-width="1.1"/></g>
<g transform="translate(1017,336)"><rect x="0.5" y="1.5" width="15" height="13" fill="#fafafa" stroke="#2680d9"/><path d="M3 14 Q5 9 8 10 Q10 6 13 3 L15.5 2 V8 Q12 9 11 14 Z" fill="#86bff0"/><path d="M0 0 H4 V4 L2 6 L0 4 Z" fill="#e8731d"/><circle cx="14" cy="10.5" r="1.8" fill="#e8731d"/><circle cx="12" cy="14" r="2" fill="#e8731d"/></g>
<g transform="translate(1045,336)"><path d="M1 14 V4 Q1 2 3 2 H14 Q16 2 16 4 V14" fill="none" stroke="#323130" stroke-width="1.2"/><path d="M4 11.5 L6.5 9 L9 11.5 L6.5 14 Z M9 11.5 L11.5 9 L14 11.5 L11.5 14 Z" fill="none" stroke="#323130" stroke-width="1.3"/></g>
<g transform="translate(1073,336)"><circle cx="1.2" cy="6.8" r="1.1" fill="#323130"/><circle cx="7.7" cy="6.8" r="1.1" fill="#323130"/><circle cx="14.2" cy="6.8" r="1.1" fill="#323130"/></g>
<rect x="952.5" y="233.5" width="32" height="29" fill="none" stroke="#4042cc" stroke-width="5"/><rect x="955" y="236" width="27" height="24" fill="#fff"/><rect x="958.75" y="237.75" width="20.5" height="20.5" fill="#d2d0ce" stroke="#605e5c" stroke-width="1.5"/><path d="M961.5 240 V255.5 H977" fill="none" stroke="#323130"/><path d="M962 248.5 L966.5 244 L971 248.5 L977 243" fill="none" stroke="#323130" stroke-width="1.1"/><path d="M962 252.5 L971 243 L977 248" fill="none" stroke="#2680d9" stroke-width="1.1"/></svg>
<!-- FIELDS LIST -->
<div class="cb" style="top:295px"></div>
<svg class="a" style="left:1180px;top:295px" width="12" height="12" viewBox="0 0 12 12"><path d="M9.8 4.2 V2.8 H1.8 L5.6 6.5 L1.8 10.2 H9.8 V8.8" fill="none" stroke="#252423" stroke-width="1.35" stroke-linejoin="miter"/></svg>
<div class="t" style="left:1201px;top:296px;font-size:12px;letter-spacing:-0.15px;color:#252423;">Age</div>
<div class="cb" style="top:319px"></div>
<svg class="a" style="left:1180px;top:318px" width="13" height="13" viewBox="0 0 13 13"><path d="M0.5 2.5 H12.5 V12.5 H0.5 Z M0.5 4.5 H12.5" fill="none" stroke="#252423"/><path d="M3.5 0.5 V3 M9.5 0.5 V3" stroke="#252423"/><g fill="#252423"><rect x="2.5" y="6" width="2" height="2"/><rect x="5.5" y="6" width="2" height="2"/><rect x="8.5" y="6" width="2" height="2"/><rect x="2.5" y="9" width="2" height="2"/><rect x="5.5" y="9" width="2" height="2"/><rect x="8.5" y="9" width="2" height="2"/></g></svg>
<svg class="a" style="left:1144px;top:321px" width="12" height="7" viewBox="0 0 12 7"><path d="M0.5 0.5 L6 6 L11.5 0.5" fill="none" stroke="#605e5c" stroke-width="1"/></svg>
<div class="t" style="left:1201px;top:320px;font-size:12px;letter-spacing:-0.15px;color:#252423;">Date</div>
<div class="cb" style="top:343px"></div>
<svg class="a" style="left:1180px;top:343px" width="12" height="12" viewBox="0 0 12 12"><path d="M9.8 4.2 V2.8 H1.8 L5.6 6.5 L1.8 10.2 H9.8 V8.8" fill="none" stroke="#252423" stroke-width="1.35" stroke-linejoin="miter"/></svg>
<div class="t" style="left:1201px;top:344px;font-size:12px;letter-spacing:-0.15px;color:#252423;">Day_month</div>
<div class="cb" style="top:367px"></div>
<div class="t" style="left:1201px;top:368px;font-size:12px;letter-spacing:-0.15px;color:#252423;">Education_l...</div>
<div class="cb" style="top:391px"></div>
<svg class="a" style="left:1180px;top:391px" width="12" height="12" viewBox="0 0 12 12"><path d="M9.8 4.2 V2.8 H1.8 L5.6 6.5 L1.8 10.2 H9.8 V8.8" fill="none" stroke="#252423" stroke-width="1.35" stroke-linejoin="miter"/></svg>
<div class="t" style="left:1201px;top:392px;font-size:12px;letter-spacing:-0.15px;color:#252423;">Feedback</div>
<div class="cb" style="top:415px"></div>
<div class="t" style="left:1201px;top:416px;font-size:12px;letter-spacing:-0.15px;color:#252423;">Gender</div>
<div class="cb" style="top:439px"></div>
<svg class="a" style="left:1179px;top:438px" width="14" height="14" viewBox="0 0 14 14"><g fill="#f2c811" stroke="#252423" stroke-width="1.1"><rect x="1.3" y="0.6" width="4.2" height="3.2" rx="0.8"/><rect x="7.3" y="4.6" width="4.2" height="3.2" rx="0.8"/><rect x="7.3" y="9.8" width="4.2" height="3.2" rx="0.8"/></g><path d="M4.5 4.8 V9.5 M2.6 6.3 H6.4 M2.6 11.4 H6.4 M4.5 9.5 V13.3" stroke="#252423" stroke-width="1.2"/></svg>
<svg class="a" style="left:1144px;top:441px" width="12" height="7" viewBox="0 0 12 7"><path d="M0.5 0.5 L6 6 L11.5 0.5" fill="none" stroke="#605e5c" stroke-width="1"/></svg>
<div class="t" style="left:1201px;top:440px;font-size:12px;letter-spacing:-0.15px;color:#252423;">Gender Hie...</div>
<div class="cb" style="top:463px"></div>
<svg class="a" style="left:1180px;top:463px" width="12" height="12" viewBox="0 0 12 12"><path d="M9.8 4.2 V2.8 H1.8 L5.6 6.5 L1.8 10.2 H9.8 V8.8" fill="none" stroke="#252423" stroke-width="1.35" stroke-linejoin="miter"/></svg>
<div class="t" style="left:1201px;top:464px;font-size:12px;letter-spacing:-0.15px;color:#252423;">Income</div>
<div class="cb" style="top:487px"></div>
<svg class="a" style="left:1180px;top:487px" width="12" height="12" viewBox="0 0 12 12"><path d="M9.8 4.2 V2.8 H1.8 L5.6 6.5 L1.8 10.2 H9.8 V8.8" fill="none" stroke="#252423" stroke-width="1.35" stroke-linejoin="miter"/></svg>
<div class="t" style="left:1201px;top:488px;font-size:12px;letter-spacing:-0.15px;color:#252423;">Interest_rate</div>
<div class="cb" style="top:511px"></div>
<svg class="a" style="left:1180px;top:511px" width="12" height="12" viewBox="0 0 12 12"><path d="M9.8 4.2 V2.8 H1.8 L5.6 6.5 L1.8 10.2 H9.8 V8.8" fill="none" stroke="#252423" stroke-width="1.35" stroke-linejoin="miter"/></svg>
<div class="t" style="left:1201px;top:512px;font-size:12px;letter-spacing:-0.15px;color:#252423;">Loan_disbu...</div>
<div class="cb" style="top:535px"></div>
<div class="t" style="left:1201px;top:536px;font-size:12px;letter-spacing:-0.15px;color:#252423;">Month</div>
<div class="cb" style="top:559px"></div>
<svg class="a" style="left:1179px;top:558px" width="14" height="14" viewBox="0 0 14 14"><g fill="#f2c811" stroke="#252423" stroke-width="1.1"><rect x="1.3" y="0.6" width="4.2" height="3.2" rx="0.8"/><rect x="7.3" y="4.6" width="4.2" height="3.2" rx="0.8"/><rect x="7.3" y="9.8" width="4.2" height="3.2" rx="0.8"/></g><path d="M4.5 4.8 V9.5 M2.6 6.3 H6.4 M2.6 11.4 H6.4 M4.5 9.5 V13.3" stroke="#252423" stroke-width="1.2"/></svg>
<svg class="a" style="left:1144px;top:561px" width="12" height="7" viewBox="0 0 12 7"><path d="M0.5 0.5 L6 6 L11.5 0.5" fill="none" stroke="#605e5c" stroke-width="1"/></svg>
<div class="t" style="left:1201px;top:560px;font-size:12px;letter-spacing:-0.15px;color:#252423;">Month Hier...</div>
<div class="cb" style="top:583px"></div>
<svg class="a" style="left:1180px;top:583px" width="12" height="12" viewBox="0 0 12 12"><path d="M9.8 4.2 V2.8 H1.8 L5.6 6.5 L1.8 10.2 H9.8 V8.8" fill="none" stroke="#252423" stroke-width="1.35" stroke-linejoin="miter"/></svg>
<div class="t" style="left:1201px;top:584px;font-size:12px;letter-spacing:-0.15px;color:#252423;">Outstandin...</div>
<div class="cb" style="top:607px"></div>
<svg class="a" style="left:1180px;top:607px" width="12" height="12" viewBox="0 0 12 12"><path d="M9.8 4.2 V2.8 H1.8 L5.6 6.5 L1.8 10.2 H9.8 V8.8" fill="none" stroke="#252423" stroke-width="1.35" stroke-linejoin="miter"/></svg>
<div class="t" style="left:1201px;top:608px;font-size:12px;letter-spacing:-0.15px;color:#252423;">Promo_Ca...</div>
<div class="cb" style="top:631px"></div>
<div class="t" style="left:1201px;top:632px;font-size:12px;letter-spacing:-0.15px;color:#252423;">Purpose</div>
<div class="cb" style="top:655px"></div>
<svg class="a" style="left:1180px;top:655px" width="12" height="12" viewBox="0 0 12 12"><path d="M9.8 4.2 V2.8 H1.8 L5.6 6.5 L1.8 10.2 H9.8 V8.8" fill="none" stroke="#252423" stroke-width="1.35" stroke-linejoin="miter"/></svg>
<div class="t" style="left:1201px;top:656px;font-size:12px;letter-spacing:-0.15px;color:#252423;">Quarter</div>
<div class="cb" style="top:679px"></div>
<div class="t" style="left:1201px;top:680px;font-size:12px;letter-spacing:-0.15px;color:#252423;">Weekday</div>
<div class="cb" style="top:703px"></div>
<!-- status bar overlay (covers overflow) -->
<div class="a" style="left:0;top:704px;width:1271px;height:1px;background:#d2d0ce"></div>
<div class="a" style="left:0;top:705px;width:1271px;height:10px;background:#f3f2f1;overflow:hidden"></div>
<div class="t" style="left:1115px;top:712px;font-size:12px;letter-spacing:0.25px;color:#323130">Update available (click to download)</div>
<div class="t" style="left:-3px;top:712px;font-size:12px;color:#323130">F 1</div>
<!-- page tab text -->
<div class="t" style="left:47.5px;top:681px;font-size:12px;letter-spacing:-0.5px;color:#323130">Page 1</div>
<!-- tooltip -->
<div class="a" style="left:908px;top:185px;width:80px;height:40px;background:#fff;box-shadow:0 0 10px rgba(0,0,0,0.16)"></div>
<div class="t" style="left:920px;top:200px;font-size:12px;letter-spacing:0.25px;-webkit-text-stroke:0.35px #252423;color:#252423">Line chart</div>
</body></html>
